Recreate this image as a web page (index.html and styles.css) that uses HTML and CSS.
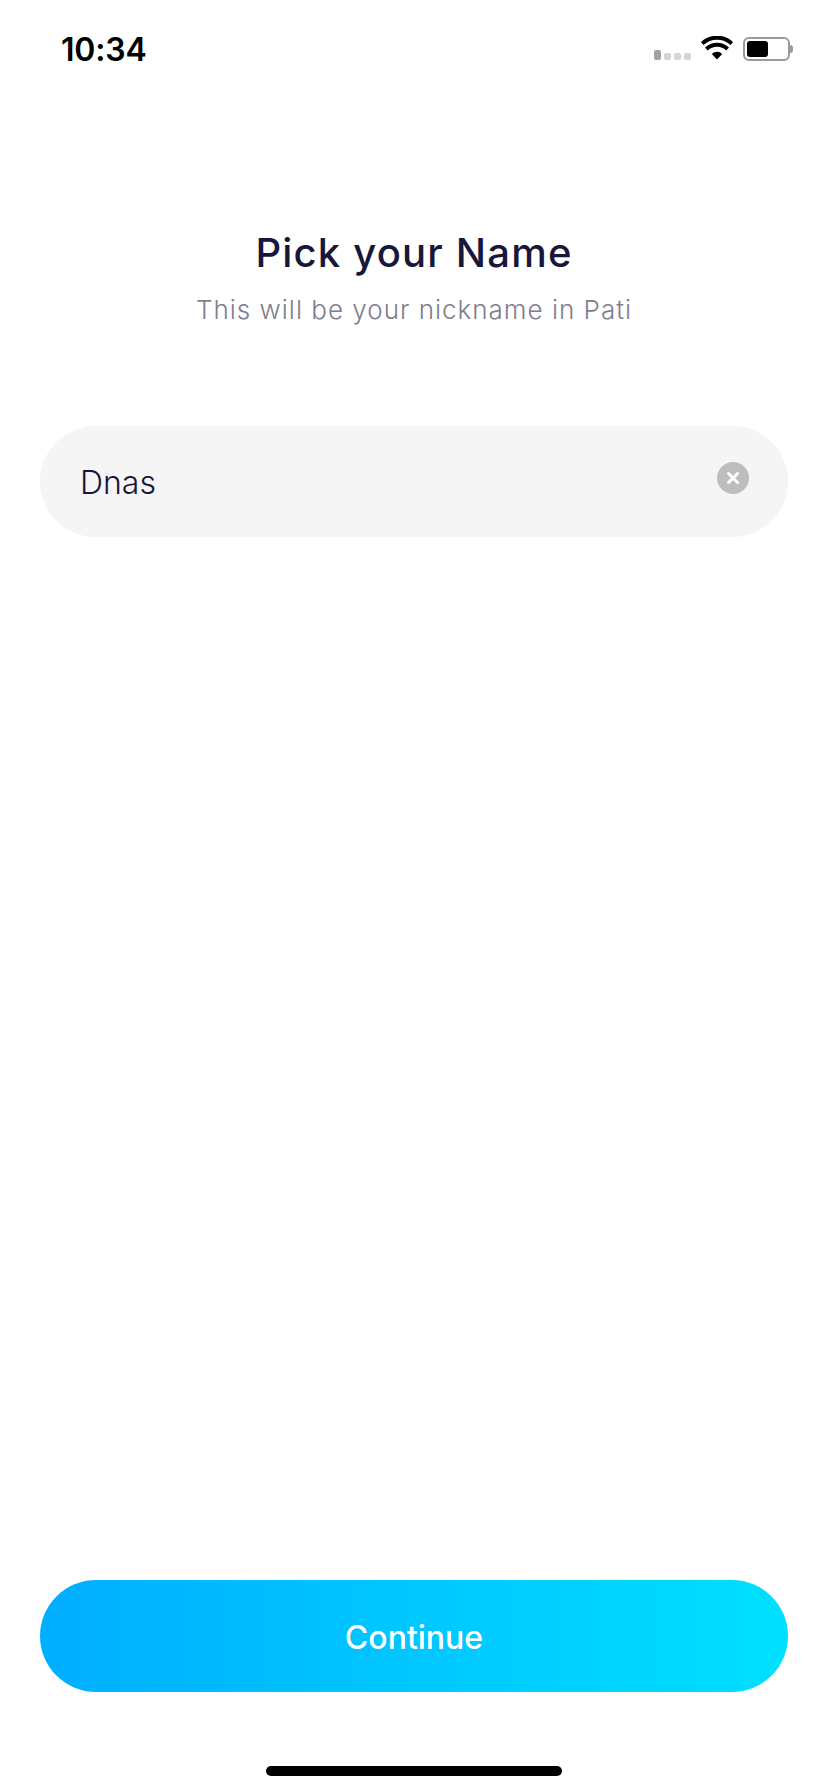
FILE: index.html
```html
<!DOCTYPE html>
<html lang="en">
<head>
<meta charset="utf-8">
<title>Pick your Name</title>
<link rel="stylesheet" href="styles.css">
</head>
<body>
<main class="screen">
  <header class="status">
    <span class="time">10:34</span>
    <div class="status-icons">
      <div class="signal"><i class="dot dot-on"></i><i class="dot"></i><i class="dot"></i><i class="dot"></i></div>
      <svg class="wifi" viewBox="0 0 32 24" width="32" height="24" aria-hidden="true">
        <path d="M16 23.5 10.8 18a7.4 7.4 0 0 1 10.4 0Z" fill="#000"/>
        <path d="M5.4 13a15.2 15.2 0 0 1 21.2 0" fill="none" stroke="#000" stroke-width="4"/>
        <path d="M1.2 7.6a21.5 21.5 0 0 1 29.6 0" fill="none" stroke="#000" stroke-width="4"/>
      </svg>
      <div class="battery"><div class="battery-body"><div class="battery-fill"></div></div><i class="battery-nub"></i></div>
    </div>
  </header>
  <section class="heading">
    <h1 class="title">Pick your Name</h1>
    <p class="subtitle">This will be your nickname in Pati</p>
  </section>
  <div class="field">
    <span class="field-value">Dnas</span>
    <span class="clear">
      <svg viewBox="0 0 32 32" width="32" height="32" aria-hidden="true">
        <circle cx="16" cy="16" r="16" fill="#bdbdbd"/>
        <path d="M11.5 11.5 20.5 20.5M20.5 11.5 11.5 20.5" stroke="#fff" stroke-width="3" stroke-linecap="round"/>
      </svg>
    </span>
  </div>
  <div class="spacer"></div>
  <button class="continue" type="button">Continue</button>
  <div class="home-bar"></div>
</main>
</body>
</html>
```
FILE: styles.css
```css
* { box-sizing: border-box; }
html, body { margin: 0; padding: 0; background: #fff; }
.screen {
  width: 828px;
  height: 1792px;
  display: flex;
  flex-direction: column;
  padding: 0 40px;
  font-family: Inter, "Liberation Sans", sans-serif;
  overflow: hidden;
}
.status {
  height: 100px;
  margin: 0 -6px 0 0;
  padding: 36px 0 0 21px;
  display: flex;
  justify-content: space-between;
  align-items: flex-start;
}
.time {
  font-size: 32px;
  line-height: 28px;
  font-weight: 600;
  letter-spacing: -0.2px;
  color: #000;
}
.status-icons { display: flex; align-items: flex-start; margin-right: 1px; }
.signal { display: flex; align-items: flex-end; gap: 3px; height: 24px; margin-right: 10px; }
.dot { width: 7px; height: 7px; border-radius: 2px; background: #d4d4d4; }
.dot-on { height: 10px; width: 7px; background: #a3a3a3; }
.wifi { margin-right: 10px; }
.battery { display: flex; align-items: center; margin-top: 1px; }
.battery-body {
  width: 47px;
  height: 24px;
  border: 2px solid #9a9a9a;
  border-radius: 6px;
  padding: 2px;
}
.battery-fill { width: 21px; height: 100%; background: #000; border-radius: 3px; }
.battery-nub { width: 3px; height: 8px; background: #9a9a9a; border-radius: 0 3px 3px 0; }
.heading { margin-top: 130px; text-align: center; }
.title {
  margin: 0;
  font-size: 40px;
  line-height: 46px;
  font-weight: 500;
  color: #17163b;
  letter-spacing: 1.2px;
}
.subtitle {
  margin: 17px 0 0;
  font-size: 26px;
  line-height: 34px;
  font-weight: 300;
  color: #7d7d8f;
  letter-spacing: 1px;
}
.field {
  margin-top: 99px;
  height: 111px;
  border-radius: 56px;
  background: #f5f5f6;
  display: flex;
  align-items: center;
  justify-content: space-between;
  padding: 2px 40px 0;
}
.field-value { font-size: 32px; font-weight: 300; color: #17163b; }
.clear { display: flex; margin-top: -10px; margin-right: -1px; }
.spacer { flex: 1; }
.continue {
  height: 112px;
  border: 0;
  border-radius: 56px;
  background: linear-gradient(90deg, #00aeff, #00e0ff);
  color: #fff;
  font-family: inherit;
  font-size: 32px;
  font-weight: 500;
  padding: 2px 0 0;
}
.home-bar {
  width: 296px;
  height: 10px;
  margin: 74px auto 16px;
  border-radius: 5px;
  background: #000;
}
```
